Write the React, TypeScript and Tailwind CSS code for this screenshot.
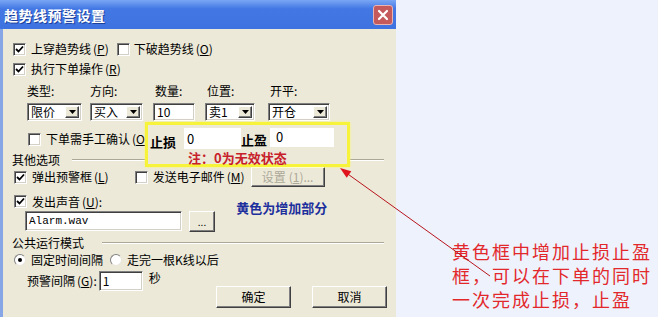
import React from "react";

const sunken =
  "border border-t-[#808080] border-l-[#808080] border-b-white border-r-white shadow-[inset_1px_1px_0_#404040,inset_-1px_-1px_0_#d4d0c8]";
const raised =
  "border border-t-white border-l-white border-b-[#404040] border-r-[#404040] shadow-[inset_-1px_-1px_0_#808080]";

function CheckBox({ checked }: { checked?: boolean }) {
  return (
    <span className={`w-[13px] h-[13px] shrink-0 bg-white flex items-center justify-center ${sunken}`}>
      {checked && (
        <svg width="9" height="9" viewBox="0 0 9 9">
          <polyline points="1,4 3.5,6.5 8,1.5" fill="none" stroke="#000" strokeWidth="1.8" />
        </svg>
      )}
    </span>
  );
}

function Radio({ checked }: { checked?: boolean }) {
  return (
    <span className="w-[12px] h-[12px] shrink-0 rounded-full bg-white border border-t-[#808080] border-l-[#808080] border-b-[#e8e6dc] border-r-[#e8e6dc] flex items-center justify-center">
      {checked && <span className="w-[4px] h-[4px] rounded-full bg-black" />}
    </span>
  );
}

function Select({ value, width }: { value: string; width: string }) {
  return (
    <div className={`${width} h-[18px] bg-white flex items-center justify-between pl-[3px] pr-[2px] ${sunken}`}>
      <span>{value}</span>
      <span className={`w-[14px] h-[12px] bg-[#ece9d8] flex items-center justify-center ${raised}`}>
        <svg width="7" height="4" viewBox="0 0 7 4">
          <polygon points="0,0 7,0 3.5,4" fill="#000" />
        </svg>
      </span>
    </div>
  );
}

function Key({ k }: { k: string }) {
  return (
    <span className="ml-[2px]">
      (<span className="underline">{k}</span>)
    </span>
  );
}

export default function App() {
  return (
    <div
      className="relative w-[658px] h-[317px] flex bg-[#edf2fc] overflow-hidden whitespace-nowrap text-[12px] leading-none text-black"
      style={{ fontFamily: '"Noto Sans CJK SC", "Liberation Sans", sans-serif' }}
    >
      {/* 对话框 */}
      <div className="w-[396px] h-[317px] flex flex-col shrink-0">
        <div className="h-[29px] flex items-center justify-between pl-[4px] pr-[3px] bg-gradient-to-b from-[#7aa6f4] via-[#4378e4] via-30% to-[#3d72e0]">
          <span className="text-white font-bold text-[14px] tracking-[0.5px] [text-shadow:1px_1px_0_#1c3f9a]">
            趋势线预警设置
          </span>
          <span className="w-[20px] h-[20px] rounded-[3px] bg-[#c45a5c] border border-[#e9b3b0] flex items-center justify-center">
            <svg width="12" height="12" viewBox="0 0 12 12">
              <path d="M2 2 L10 10 M10 2 L2 10" stroke="#fff" strokeWidth="2.2" strokeLinecap="round" />
            </svg>
          </span>
        </div>

        <div className="relative flex-1 bg-[#ece9d8] border-l-[3px] border-l-[#86a6e6] flex flex-col">
          {/* 上穿 / 下破 */}
          <div className="mt-[10px] h-[20px] flex items-center pl-[10px]">
            <CheckBox checked />
            <span className="ml-[5px]">上穿趋势线<Key k="P" /></span>
            <span className="ml-[8px]"><CheckBox /></span>
            <span className="ml-[4px]">下破趋势线<Key k="O" /></span>
          </div>
          <div className="h-[20px] flex items-center pl-[10px]">
            <CheckBox checked />
            <span className="ml-[5px]">执行下单操作<Key k="R" /></span>
          </div>

          {/* 下单参数 */}
          <div className="mt-[4px] flex pl-[24px]">
            {[
              { label: "类型:", w: "w-[55px]", m: "" },
              { label: "方向:", w: "w-[53px]", m: "ml-[8px]" },
              { label: "数量:", w: "w-[42px]", m: "ml-[10px]" },
              { label: "位置:", w: "w-[50px]", m: "ml-[10px]" },
              { label: "开平:", w: "w-[62px]", m: "ml-[13px]" },
            ].map((c, i) => (
              <div key={c.label} className={`${c.w} ${c.m} flex flex-col`}>
                <span className={`h-[16px] flex items-center ${i > 1 ? "pl-[2px]" : ""}`}>{c.label}</span>
                <div className="mt-[4px]">
                  {i === 0 && <Select value="限价" width="w-[55px]" />}
                  {i === 1 && <Select value="买入" width="w-[53px]" />}
                  {i === 2 && (
                    <div className={`w-[42px] h-[18px] bg-white flex items-center pl-[3px] ${sunken}`}>10</div>
                  )}
                  {i === 3 && <Select value="卖1" width="w-[50px]" />}
                  {i === 4 && <Select value="开仓" width="w-[62px]" />}
                </div>
              </div>
            ))}
          </div>

          <div className="mt-[8px] h-[20px] flex items-center pl-[25px]">
            <CheckBox />
            <span className="ml-[5px]">下单需手工确认<Key k="O" /></span>
          </div>

          {/* 其他选项 */}
          <div className="mt-[4px] h-[14px] flex items-center pl-[9px] pr-[12px]">
            <span>其他选项</span>
            <span className="ml-[12px] flex-1 border-t border-t-[#aca899] border-b border-b-white" />
          </div>
          <div className="h-[20px] flex items-center pl-[11px]">
            <CheckBox checked />
            <span className="ml-[5px]">弹出预警框<Key k="L" /></span>
            <span className="ml-[26px]"><CheckBox /></span>
            <span className="ml-[5px]">发送电子邮件<Key k="M" /></span>
            <span className={`ml-[6px] w-[74px] h-[20px] bg-[#ece9d8] text-[#aca899] flex items-center justify-center ${raised}`}>
              设置<span className="ml-[3px]">(<span className="underline">1</span>)...</span>
            </span>
          </div>
          <div className="mt-[4px] h-[20px] flex items-start pl-[11px]">
            <span className="mt-[4px]"><CheckBox checked /></span>
            <span className="ml-[5px] mt-[5px]">发出声音<Key k="U" />:</span>
            <span className="ml-[134px] mt-[10px] text-[13px] font-bold text-[#1c2f9c]">黄色为增加部分</span>
          </div>
          <div className="h-[21px] flex items-start pl-[22px]">
            <div
              className={`w-[157px] h-[20px] bg-white flex items-center pl-[3px] text-[11px] ${sunken}`}
              style={{ fontFamily: '"Liberation Mono", monospace' }}
            >
              Alarm.wav
            </div>
            <span className={`ml-[7px] w-[26px] h-[21px] bg-[#ece9d8] flex items-end justify-center pb-[4px] text-[10px] ${raised}`}>
              ...
            </span>
          </div>

          {/* 公共运行模式 */}
          <div className="mt-[4px] h-[14px] flex items-center pl-[9px] pr-[12px]">
            <span>公共运行模式</span>
            <span className="ml-[18px] flex-1 border-t border-t-[#aca899] border-b border-b-white" />
          </div>
          <div className="mt-[1px] h-[18px] flex items-center pl-[11px]">
            <Radio checked />
            <span className="ml-[5px]">固定时间间隔</span>
            <span className="ml-[7px]"><Radio /></span>
            <span className="ml-[5px]">走完一根K线以后</span>
          </div>
          <div className="mt-[2px] flex">
            <div className="w-[190px] h-[20px] shrink-0 flex items-center pl-[24px]">
              <span>预警间隔<Key k="G" />:</span>
              <div className={`ml-[2px] w-[44px] h-[20px] shrink-0 bg-white flex items-center pl-[3px] ${sunken}`}>1</div>
              <span className="ml-[6px] -mt-[6px]">秒</span>
            </div>
            <div className="ml-[23px] mt-[15px] flex gap-[21px]">
              <span className={`w-[75px] h-[22px] bg-[#ece9d8] flex items-center justify-center ${raised}`}>确定</span>
              <span className={`w-[75px] h-[22px] bg-[#ece9d8] flex items-center justify-center ${raised}`}>取消</span>
            </div>
          </div>

          {/* 黄色框：止损止盈 */}
          <div className="absolute left-[142px] top-[93px] w-[205px] h-[45px] bg-[#ece9d8] border-[3px] border-[#f6f33a] shadow-[0_0_2px_#fbf86a] flex flex-col">
            <div className="mt-[3px] h-[21px] flex items-center">
              <span className="ml-[2px] mt-[6px] font-bold text-[13px]">止损</span>
              <span className="ml-[8px] w-[57px] h-[21px] bg-white pl-[3px] pt-[4px] text-[13px]">0</span>
              <span className="font-bold text-[13px] mt-[2px]">止盈</span>
              <span className="ml-[3px] w-[64px] h-[19px] bg-white pl-[6px] pt-[2px] text-[13px] -mt-[2px]">0</span>
            </div>
            <span className="ml-[40px] mt-[2px] font-bold text-[13px] text-[#c8202a]">注：0为无效状态</span>
          </div>
        </div>
      </div>

      {/* 说明文字 */}
      <div className="flex-1 pl-[56px] pt-[239px] text-[18px] leading-[24px] tracking-[2px] text-[#e3282c]">
        <div>黄色框中增加止损止盈</div>
        <div>框，可以在下单的同时</div>
        <div>一次完成止损，止盈</div>
      </div>

      {/* 箭头 */}
      <svg className="absolute inset-0 pointer-events-none" width="658" height="317" viewBox="0 0 658 317">
        <line x1="345" y1="172" x2="490" y2="276" stroke="#b8141c" strokeWidth="1" />
        <polygon points="340,168 351.3,171.3 346.7,177.7" fill="#e0141c" />
      </svg>
    </div>
  );
}
